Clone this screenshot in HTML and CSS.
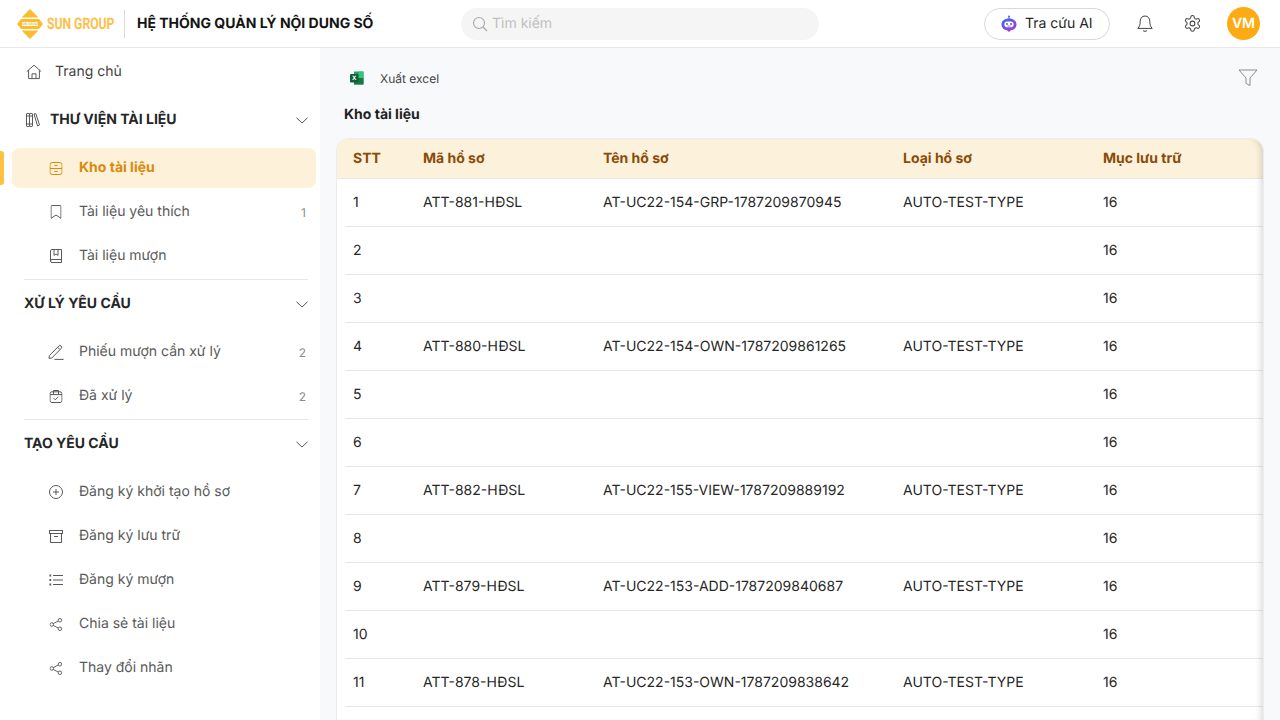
FILE: index.html
```html
<!DOCTYPE html>
<html lang="vi">
<head>
    <meta charset="utf-8">
    <title>Kho tài liệu</title>
    <link rel="stylesheet" href="styles.css">
</head>
<body>
    <header class="topbar">
        <div class="topbar-left">
            <div class="logo">
                <svg class="logo-mark" width="26" height="30" viewBox="0 0 26 30">
                    <path d="M13 0 L21.5 8.5 H4.5 Z" fill="#fdbb2f"/>
                    <path d="M13 30 L21.5 21.5 H4.5 Z" fill="#fdbb2f"/>
                    <path d="M4 10 H22 L26 15 L22 20 H4 L0 15 Z" fill="#fdbb2f"/>
                    <path d="M5 13 H21 V17 H5 Z" fill="#fff"/>
                    <text x="13" y="16.4" font-size="3.4" font-weight="700" text-anchor="middle" fill="#fdbb2f" font-family="Roboto, sans-serif">SUN GROUP</text>
                </svg>
                <span class="logo-text"><span>SUN GROUP</span></span>
            </div>
            <div class="topbar-sep"></div>
            <div class="app-title">HỆ THỐNG QUẢN LÝ NỘI DUNG SỐ</div>
        </div>
        <div class="search">
            <svg width="16" height="16" viewBox="0 0 16 16" fill="none" stroke="#a6a6a6" stroke-width="1.1"><circle cx="7" cy="7" r="5.5"/><path d="M11 11 L15 15"/></svg>
            <span>Tìm kiếm</span>
        </div>
        <div class="topbar-right">
            <div class="ai-btn">
                <svg width="16" height="18" viewBox="0 0 16 18">
                    <defs><linearGradient id="aiGrad" x1="0" y1="0" x2="1" y2="1"><stop offset="0" stop-color="#2f6bf0"/><stop offset="1" stop-color="#c22fd8"/></linearGradient></defs>
                    <circle cx="8" cy="1.6" r="1.1" fill="#3f7cf2"/>
                    <path d="M8 2 V4" stroke="#3f7cf2"/>
                    <path d="M8 3.5 C12.5 3.5 15.5 6 15.5 9.5 C15.5 13 12.5 15.2 10 15.2 L8 17 L6 15.2 C3.5 15.2 .5 13 .5 9.5 C.5 6 3.5 3.5 8 3.5 Z" fill="url(#aiGrad)"/>
                    <rect x="3.4" y="6.6" width="9.2" height="5.6" rx="2.8" fill="#fff"/>
                    <circle cx="6" cy="9" r=".9" fill="#4b46e0"/><circle cx="10" cy="9" r=".9" fill="#4b46e0"/>
                    <path d="M6.5 11 H9.5" stroke="#4b46e0" stroke-width=".7"/>
                </svg>
                <span>Tra cứu AI</span>
            </div>
            <svg class="top-icon" width="16" height="18" viewBox="0 0 16 18" fill="none" stroke="#434343" stroke-width="1"><path d="M8 1 C5 1 3.2 3.4 3.2 6.2 C3.2 10 2.4 11.6 .8 13.4 H15.2 C13.6 11.6 12.8 10 12.8 6.2 C12.8 3.4 11 1 8 1 Z"/><path d="M6 15.4 C6.4 16.6 9.6 16.6 10 15.4"/></svg>
            <svg class="top-icon" width="19" height="19" viewBox="0 0 24 24" fill="none" stroke="#434343" stroke-width="1.3"><path d="M12.2 2h-.4a2 2 0 0 0-2 2v.2a2 2 0 0 1-1 1.7l-.4.3a2 2 0 0 1-2 0l-.2-.1a2 2 0 0 0-2.7.7l-.2.4a2 2 0 0 0 .7 2.7l.2.1a2 2 0 0 1 1 1.7v.5a2 2 0 0 1-1 1.7l-.2.1a2 2 0 0 0-.7 2.7l.2.4a2 2 0 0 0 2.7.7l.2-.1a2 2 0 0 1 2 0l.4.3a2 2 0 0 1 1 1.7v.2a2 2 0 0 0 2 2h.4a2 2 0 0 0 2-2v-.2a2 2 0 0 1 1-1.7l.4-.3a2 2 0 0 1 2 0l.2.1a2 2 0 0 0 2.7-.7l.2-.4a2 2 0 0 0-.7-2.7l-.2-.1a2 2 0 0 1-1-1.7v-.5a2 2 0 0 1 1-1.7l.2-.1a2 2 0 0 0 .7-2.7l-.2-.4a2 2 0 0 0-2.7-.7l-.2.1a2 2 0 0 1-2 0l-.4-.3a2 2 0 0 1-1-1.7V4a2 2 0 0 0-2-2Z"/><circle cx="12" cy="12" r="3"/></svg>
            <div class="avatar">VM</div>
        </div>
    </header>

    <div class="layout">
        <aside class="sidebar">
            <a class="nav-item nav-home">
                <svg width="16" height="16" viewBox="0 0 16 16" fill="none" stroke="#595959" stroke-width="1"><path d="M.8 7.6 L8 1.2 L15.2 7.6"/><path d="M2.6 6.2 V14.6 H13.4 V6.2"/><path d="M6 14.6 V9.8 H10 V14.6"/></svg>
                <span>Trang chủ</span>
            </a>

            <div class="group-title">
                <span class="group-name">
                    <svg class="group-icon" width="14" height="14" viewBox="0 0 14 14" fill="none" stroke="#595959" stroke-width="1"><rect x=".5" y=".5" width="3" height="13" rx=".6"/><rect x="3.5" y=".5" width="3" height="13" rx=".6"/><path d="M.5 3 H6.5 M.5 11 H6.5"/><path d="M8 1 L9.8 .6 L13.5 12 L11.6 13 Z" stroke-linejoin="round"/></svg>
                    THƯ VIỆN TÀI LIỆU
                </span>
                <svg class="chevron" width="12" height="7" viewBox="0 0 12 7" fill="none" stroke="#595959"><path d="M.5 .8 L6 6 L11.5 .8"/></svg>
            </div>
            <div class="nav-list">
                <a class="nav-item active">
                    <svg width="13" height="13" viewBox="0 0 13 13" fill="none" stroke="#d98a0b" stroke-width="1"><rect x=".5" y=".5" width="12" height="12" rx="2.2"/><path d="M.5 6.5 H12.5 M4.8 3.4 H8.2 M4.8 9.6 H8.2"/></svg>
                    <span>Kho tài liệu</span>
                </a>
                <a class="nav-item">
                    <svg width="11" height="14" viewBox="0 0 11 14" fill="none" stroke="#595959" stroke-width="1"><path d="M.5 1.5 A1 1 0 0 1 1.5 .5 H9.5 A1 1 0 0 1 10.5 1.5 V13.3 L5.5 10 L.5 13.3 Z" stroke-linejoin="round"/></svg>
                    <span>Tài liệu yêu thích</span>
                    <em class="count">1</em>
                </a>
                <a class="nav-item">
                    <svg width="12" height="14" viewBox="0 0 12 14" fill="none" stroke="#595959" stroke-width="1"><path d="M.5 11.6 V2 A1.5 1.5 0 0 1 2 .5 H11.5 V13.5 H2 A1.5 1.5 0 0 1 .5 12 A1.5 1.5 0 0 1 2 10.5 H11.5"/><path d="M4 .5 V6.4 L6 5 L8 6.4 V.5"/></svg>
                    <span>Tài liệu mượn</span>
                </a>
            </div>
            <div class="nav-divider"></div>

            <div class="group-title">
                <span class="group-name">XỬ LÝ YÊU CẦU</span>
                <svg class="chevron" width="12" height="7" viewBox="0 0 12 7" fill="none" stroke="#595959"><path d="M.5 .8 L6 6 L11.5 .8"/></svg>
            </div>
            <div class="nav-list">
                <a class="nav-item">
                    <svg width="16" height="15" viewBox="0 0 16 15" fill="none" stroke="#595959" stroke-width="1"><path d="M1.4 10.6 L1 13.4 L3.8 13 L13.2 3.4 A1.7 1.7 0 0 0 10.8 1 Z"/><path d="M9.6 2.2 L12 4.6"/><path d="M6.4 14.4 H15.6"/></svg>
                    <span>Phiếu mượn cần xử lý</span>
                    <em class="count">2</em>
                </a>
                <a class="nav-item">
                    <svg width="13" height="13" viewBox="0 0 13 13" fill="none" stroke="#595959" stroke-width="1"><rect x=".5" y="1.8" width="12" height="10.7" rx="2"/><path d="M.5 4.6 H12.5 M4 .5 H9 V4.6 M4 .5 V4.6"/><path d="M4.2 8.2 L5.8 9.8 L8.8 6.8"/></svg>
                    <span>Đã xử lý</span>
                    <em class="count">2</em>
                </a>
            </div>
            <div class="nav-divider"></div>

            <div class="group-title">
                <span class="group-name">TẠO YÊU CẦU</span>
                <svg class="chevron" width="12" height="7" viewBox="0 0 12 7" fill="none" stroke="#595959"><path d="M.5 .8 L6 6 L11.5 .8"/></svg>
            </div>
            <div class="nav-list">
                <a class="nav-item">
                    <svg width="14" height="14" viewBox="0 0 14 14" fill="none" stroke="#595959" stroke-width="1"><circle cx="7" cy="7" r="6.5"/><path d="M7 4 V10 M4 7 H10"/></svg>
                    <span>Đăng ký khởi tạo hồ sơ</span>
                </a>
                <a class="nav-item">
                    <svg width="14" height="13" viewBox="0 0 14 13" fill="none" stroke="#595959" stroke-width="1"><rect x=".5" y=".5" width="13" height="3"/><path d="M1.5 3.5 V12.5 H12.5 V3.5 M5 6.5 H9"/></svg>
                    <span>Đăng ký lưu trữ</span>
                </a>
                <a class="nav-item">
                    <svg width="14" height="12" viewBox="0 0 14 12" fill="none" stroke="#595959" stroke-width="1"><path d="M4 1.5 H14 M4 6 H14 M4 10.5 H14"/><path d="M.4 1.5 H2.2 M.4 6 H2.2 M.4 10.5 H2.2" stroke-width="2"/></svg>
                    <span>Đăng ký mượn</span>
                </a>
                <a class="nav-item">
                    <svg width="13" height="13" viewBox="0 0 14 14" fill="none" stroke="#595959" stroke-width="1"><circle cx="2.4" cy="7" r="1.9"/><circle cx="11.2" cy="2.4" r="1.9"/><circle cx="11.2" cy="11.6" r="1.9"/><path d="M4 6 L9.5 3.2 M4 8 L9.5 10.8"/></svg>
                    <span>Chia sẻ tài liệu</span>
                </a>
                <a class="nav-item">
                    <svg width="13" height="13" viewBox="0 0 14 14" fill="none" stroke="#595959" stroke-width="1"><circle cx="2.4" cy="7" r="1.9"/><circle cx="11.2" cy="2.4" r="1.9"/><circle cx="11.2" cy="11.6" r="1.9"/><path d="M4 6 L9.5 3.2 M4 8 L9.5 10.8"/></svg>
                    <span>Thay đổi nhãn</span>
                </a>
            </div>
        </aside>

        <main class="content">
            <div class="toolbar">
                <div class="export">
                    <svg width="16" height="16" viewBox="0 0 16 16">
                        <path d="M5 1.5 H14.5 V14.5 H5 Z" fill="#21a366"/>
                        <path d="M9.7 1.5 H14.5 V8 H9.7 Z" fill="#33c481"/>
                        <path d="M5 8 H14.5 V14.5 H5 Z" fill="#107c41"/>
                        <rect x="1" y="4" width="8.4" height="8.4" rx="1" fill="#185c37"/>
                        <text x="5.2" y="10.4" font-size="6" font-weight="700" text-anchor="middle" fill="#fff" font-family="Inter, sans-serif">X</text>
                    </svg>
                    <span>Xuất excel</span>
                </div>
                <svg width="20" height="18" viewBox="0 0 20 18" fill="none" stroke="#8c8c8c" stroke-width="1"><path d="M1 1 H19 L12 9 V16.6 L8 14.4 V9 Z" stroke-linejoin="round"/></svg>
            </div>
            <h2 class="page-title">Kho tài liệu</h2>

            <div class="table-card">
                <div class="table-row table-head">
                    <div>STT</div><div>Mã hồ sơ</div><div>Tên hồ sơ</div><div>Loại hồ sơ</div><div>Mục lưu trữ</div>
                </div>
                <div class="table-row"><div>1</div><div>ATT-881-HĐSL</div><div>AT-UC22-154-GRP-1787209870945</div><div>AUTO-TEST-TYPE</div><div>16</div></div>
                <div class="table-row"><div>2</div><div></div><div></div><div></div><div>16</div></div>
                <div class="table-row"><div>3</div><div></div><div></div><div></div><div>16</div></div>
                <div class="table-row"><div>4</div><div>ATT-880-HĐSL</div><div>AT-UC22-154-OWN-1787209861265</div><div>AUTO-TEST-TYPE</div><div>16</div></div>
                <div class="table-row"><div>5</div><div></div><div></div><div></div><div>16</div></div>
                <div class="table-row"><div>6</div><div></div><div></div><div></div><div>16</div></div>
                <div class="table-row"><div>7</div><div>ATT-882-HĐSL</div><div>AT-UC22-155-VIEW-1787209889192</div><div>AUTO-TEST-TYPE</div><div>16</div></div>
                <div class="table-row"><div>8</div><div></div><div></div><div></div><div>16</div></div>
                <div class="table-row"><div>9</div><div>ATT-879-HĐSL</div><div>AT-UC22-153-ADD-1787209840687</div><div>AUTO-TEST-TYPE</div><div>16</div></div>
                <div class="table-row"><div>10</div><div></div><div></div><div></div><div>16</div></div>
                <div class="table-row"><div>11</div><div>ATT-878-HĐSL</div><div>AT-UC22-153-OWN-1787209838642</div><div>AUTO-TEST-TYPE</div><div>16</div></div>
            </div>
        </main>
    </div>
</body>
</html>
```

FILE: styles.css
```css
* {
    box-sizing: border-box;
}
html, body {
    height: 100%;
}
body {
    margin: 0;
    font-family: Inter, "Noto Sans", sans-serif;
    font-size: 14px;
    color: #262626;
    background: #fff;
    overflow: hidden;
    text-rendering: geometricPrecision;
}
svg {
    flex: none;
    display: block;
}

/* Thanh trên cùng */
.topbar {
    height: 48px;
    display: grid;
    grid-template-columns: 1fr 358px 1fr;
    align-items: center;
    border-bottom: 1px solid #e8e8e8;
    background: #fff;
}
.topbar-left {
    display: flex;
    align-items: center;
    padding-left: 17px;
}
.logo {
    display: flex;
    align-items: center;
    gap: 4px;
}
.logo-text {
    width: 65px;
    display: block;
    white-space: nowrap;
}
.logo-text span {
    display: inline-block;
    font-family: Roboto, sans-serif;
    font-weight: 700;
    font-size: 16px;
    color: #fdc04a;
    transform: scaleX(0.76);
    transform-origin: left center;
}
.topbar-sep {
    width: 1px;
    height: 28px;
    background: #dcdcdc;
    margin: 0 12px 0 12px;
}
.app-title {
    font-size: 14px;
    font-weight: 700;
    color: #141414;
    white-space: nowrap;
}
.search {
    height: 32px;
    border-radius: 16px;
    background: #f5f5f5;
    display: flex;
    align-items: center;
    gap: 4px;
    padding-left: 11px;
    color: #bfbfbf;
}
.topbar-right {
    display: flex;
    align-items: center;
    justify-content: flex-end;
    padding-right: 20px;
}
.ai-btn {
    height: 32px;
    width: 126px;
    border: 1px solid #d9d9d9;
    border-radius: 16px;
    display: flex;
    align-items: center;
    gap: 8px;
    padding-left: 16px;
    color: #262626;
    margin-right: 27px;
}
.top-icon {
    margin-right: 30px;
}
.top-icon + .top-icon {
    margin-right: 25px;
}
.avatar {
    width: 33px;
    height: 33px;
    border-radius: 50%;
    background: #fdab15;
    color: #fff;
    font-weight: 600;
    font-size: 14px;
    display: flex;
    align-items: center;
    justify-content: center;
}

/* Bố cục chính */
.layout {
    display: flex;
    height: calc(100% - 48px);
}

/* Menu bên trái */
.sidebar {
    width: 320px;
    flex: none;
    background: #fff;
    padding-top: 4px;
}
.nav-item {
    position: relative;
    height: 40px;
    margin: 0 4px 0 12px;
    padding: 0 10px 0 35px;
    display: flex;
    align-items: center;
    border-radius: 8px;
    color: #595959;
}
.nav-item svg {
    position: absolute;
    left: 43.5px;
    transform: translateX(-50%);
}
.nav-home {
    color: #434343;
    padding-left: 43px;
    margin-bottom: 4px;
}
.nav-home svg {
    left: 22px;
}
.nav-item span {
    margin-left: 32px;
    margin-bottom: 2px;
}
.nav-home span {
    margin-left: 0;
}
.nav-list {
    display: flex;
    flex-direction: column;
    gap: 4px;
    padding-top: 4px;
}
.nav-item.active {
    background: #fdf1d9;
    color: #d98a0b;
    font-weight: 700;
}
.nav-item.active::before {
    content: "";
    position: absolute;
    left: -12px;
    top: 3px;
    bottom: 3px;
    width: 4px;
    background: #fdc23e;
    border-radius: 0 3px 3px 0;
}
.count {
    margin-left: auto;
    font-style: normal;
    font-size: 12px;
    color: #8c8c8c;
}
.group-title {
    height: 48px;
    margin: 0 12px 0 24px;
    display: flex;
    align-items: center;
    justify-content: space-between;
}
.group-name {
    display: flex;
    align-items: center;
    gap: 10px;
    padding-bottom: 2px;
    font-weight: 700;
    color: #262626;
}
.group-icon {
    margin: 2px 0 0 2px;
}
.nav-divider {
    height: 1px;
    margin: 3px 12px 0 24px;
    background: #e8e8e8;
}

/* Nội dung */
.content {
    flex: 1;
    min-width: 0;
    background: #f8f9fb;
    padding: 0 17px;
    display: flex;
    flex-direction: column;
}
.toolbar {
    height: 60px;
    display: flex;
    align-items: center;
    justify-content: space-between;
    padding: 0 5px 0 12px;
}
.export {
    display: flex;
    align-items: center;
    gap: 15px;
    font-size: 12px;
    color: #434343;
}
.page-title {
    margin: -2px 0 16px 7px;
    font-size: 14px;
    line-height: 17px;
    font-weight: 700;
    color: #1f1f1f;
}
.table-card {
    position: relative;
    flex: 1;
    background: #fff;
    border-radius: 12px 12px 0 0;
    box-shadow: 0 0 0 1px #e9edf2;
    overflow: hidden;
}
.table-card::after {
    content: "";
    position: absolute;
    inset: 0;
    pointer-events: none;
    border-radius: 12px 12px 0 0;
    box-shadow: inset -6px 0 6px -4px rgba(0, 0, 0, 0.15);
}
.table-row {
    display: grid;
    grid-template-columns: 70px 180px 300px 200px 1fr;
    align-items: center;
    height: 48px;
    margin-left: 8px;
    padding-left: 8px;
    border-bottom: 1px solid #e8e8e8;
    white-space: nowrap;
}
.table-head {
    height: 40px;
    margin-left: 0;
    padding-left: 16px;
    background: #fcf1da;
    color: #8a4b08;
    font-weight: 700;
}
```
